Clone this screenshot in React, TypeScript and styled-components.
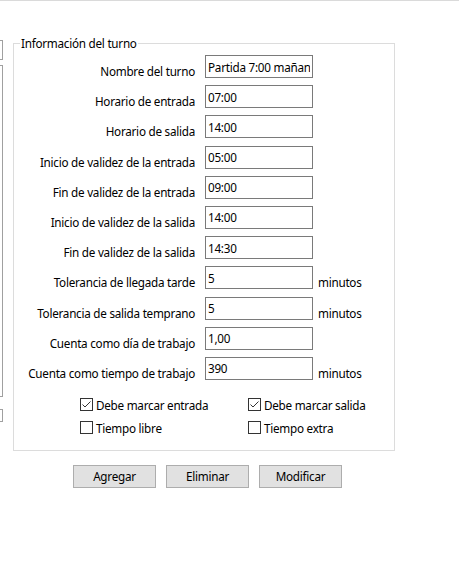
import React from 'react';
import styled, { createGlobalStyle } from 'styled-components';

const GlobalStyle = createGlobalStyle`
    html, body {
        margin: 0;
        padding: 0;
        background: #ffffff;
    }
    body {
        font-family: 'Noto Sans', 'Liberation Sans', sans-serif;
        font-size: 11.7px;
        letter-spacing: -0.25px;
        color: #000000;
    }
`;

const Page = styled.div`
    display: flex;
    flex-direction: column;
    width: 459px;
    height: 567px;
    overflow: hidden;
`;

const TopRule = styled.div`
    height: 1px;
    background: #dadada;
`;

const Body = styled.div`
    display: flex;
    flex-direction: row;
`;

const LeftStrip = styled.div`
    display: flex;
    flex-direction: column;
    width: 3px;
`;

const StripBox = styled.div<{ $top: number; $height: number }>`
    margin-top: ${p => p.$top}px;
    height: ${p => p.$height}px;
    width: 2px;
    border: 1px solid #a0a0a0;
    border-left: none;
`;

const Main = styled.div`
    display: flex;
    flex-direction: column;
    margin-left: 10px;
    margin-top: 34px;
    width: 382px;
`;

const Group = styled.fieldset`
    margin: 0;
    padding: 4px 0 14px 0;
    border: 1px solid #dcdcdc;
    min-width: 0;
`;

const Legend = styled.legend`
    margin-left: 6px;
    padding: 0 1px;
    line-height: 16px;
`;

const Rows = styled.div`
    display: flex;
    flex-direction: column;
    gap: 7.2px;
`;

const Row = styled.div`
    display: grid;
    grid-template-columns: 191px 108px auto;
    height: 23px;
`;

const Label = styled.div`
    text-align: right;
    padding-right: 10px;
    padding-top: 8px;
    line-height: 16px;
    white-space: nowrap;
`;

const Unit = styled.div`
    padding-left: 5px;
    padding-top: 8px;
    line-height: 16px;
`;

const TextBox = styled.input`
    box-sizing: border-box;
    width: 108px;
    height: 23px;
    margin: 0;
    padding: 0 2px;
    border: 1px solid #7a7a7a;
    border-radius: 0;
    background: #ffffff;
    font-family: inherit;
    font-size: inherit;
    letter-spacing: inherit;
    color: #000000;
    outline: none;
`;

const Checks = styled.div`
    display: grid;
    grid-template-columns: 168px auto;
    row-gap: 7px;
    padding-left: 66px;
    margin-top: 17px;
`;

const CheckItem = styled.label`
    display: flex;
    align-items: center;
    gap: 3px;
    height: 16px;
    line-height: 16px;
    white-space: nowrap;
`;

const Box = styled.span`
    display: inline-flex;
    box-sizing: border-box;
    width: 13px;
    height: 13px;
    border: 1px solid #333333;
    background: #ffffff;
`;

const Buttons = styled.div`
    display: flex;
    gap: 10px;
    margin-top: 14px;
    padding-left: 60px;
`;

const Button = styled.button`
    box-sizing: border-box;
    width: 83px;
    height: 23px;
    margin: 0;
    padding: 0;
    border: 1px solid #adadad;
    border-radius: 0;
    background: #e1e1e1;
    font-family: inherit;
    font-size: inherit;
    letter-spacing: inherit;
    color: #000000;
`;

type Field = { label: string; value: string; unit?: string };

const fields: Field[] = [
    { label: 'Nombre del turno', value: 'Partida 7:00 mañana' },
    { label: 'Horario de entrada', value: '07:00' },
    { label: 'Horario de salida', value: '14:00' },
    { label: 'Inicio de validez de la entrada', value: '05:00' },
    { label: 'Fin de validez de la entrada', value: '09:00' },
    { label: 'Inicio de validez de la salida', value: '14:00' },
    { label: 'Fin de validez de la salida', value: '14:30' },
    { label: 'Tolerancia de llegada tarde', value: '5', unit: 'minutos' },
    { label: 'Tolerancia de salida temprano', value: '5', unit: 'minutos' },
    { label: 'Cuenta como día de trabajo', value: '1,00' },
    { label: 'Cuenta como tiempo de trabajo', value: '390', unit: 'minutos' },
];

const CheckBox = ({ checked, label }: { checked: boolean; label: string }) => (
    <CheckItem>
        <Box>
            {checked && (
                <svg width="11" height="11" viewBox="0 0 11 11">
                    <path d="M1.5 5.5 L4 8 L9.5 2.5" fill="none" stroke="#333333" strokeWidth="1" />
                </svg>
            )}
        </Box>
        {label}
    </CheckItem>
);

export default function App() {
    return (
        <Page>
            <GlobalStyle />
            <TopRule />
            <Body>
                <LeftStrip>
                    <StripBox $top={39} $height={18} />
                    <StripBox $top={5} $height={330} />
                    <StripBox $top={12} $height={11} />
                </LeftStrip>
                <Main>
                    <Group>
                        <Legend>Información del turno</Legend>
                        <Rows>
                            {fields.map(f => (
                                <Row key={f.label}>
                                    <Label>{f.label}</Label>
                                    <TextBox readOnly defaultValue={f.value} />
                                    {f.unit && <Unit>{f.unit}</Unit>}
                                </Row>
                            ))}
                        </Rows>
                        <Checks>
                            <CheckBox checked label="Debe marcar entrada" />
                            <CheckBox checked label="Debe marcar salida" />
                            <CheckBox checked={false} label="Tiempo libre" />
                            <CheckBox checked={false} label="Tiempo extra" />
                        </Checks>
                    </Group>
                    <Buttons>
                        <Button>Agregar</Button>
                        <Button>Eliminar</Button>
                        <Button>Modificar</Button>
                    </Buttons>
                </Main>
            </Body>
        </Page>
    );
}
